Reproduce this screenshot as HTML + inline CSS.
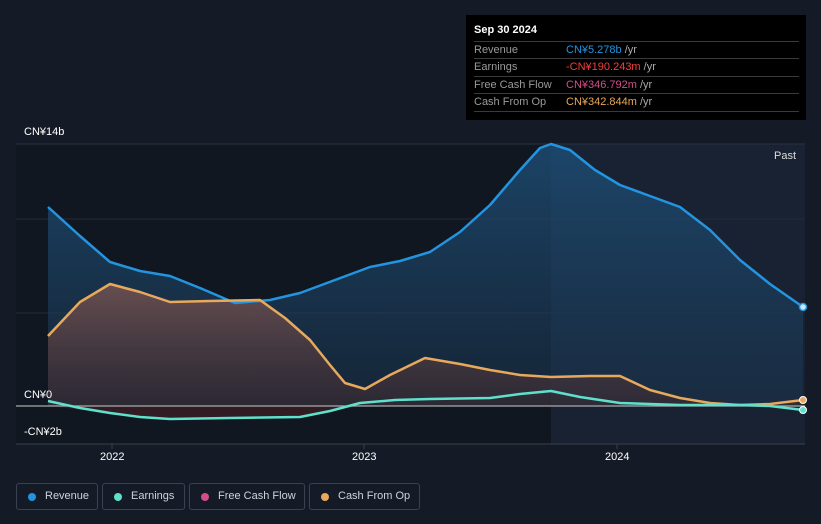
<!DOCTYPE html>
<html><head><style>
body{margin:0;width:821px;height:524px;background:#151b26;font-family:"Liberation Sans",sans-serif;overflow:hidden;position:relative}
.t{position:absolute;color:#fff;font-size:11px}
.tip{position:absolute;left:466px;top:15px;width:340px;height:105px;background:#000;}
.tip .h{position:absolute;left:8px;top:9px;color:#fff;font-size:11px;font-weight:bold}
.row{position:absolute;left:8px;width:325px;border-top:1px solid #3a3a3a;height:17px;font-size:11px;line-height:17px}
.row .k{position:absolute;left:0;color:#9a9a9a}
.row .v{position:absolute;left:92px}
.lg{position:absolute;top:483px;height:27px;border:1px solid #3b4150;border-radius:3px;box-sizing:border-box;color:#cfd3da;font-size:11px;line-height:25px}
.lg i{position:absolute;left:11px;top:9px;width:8px;height:8px;border-radius:50%}
.lg span{position:absolute;left:28px}
</style></head><body>
<svg width="821" height="524" style="position:absolute;left:0;top:0">
<defs>
<linearGradient id="rg" x1="0" y1="0" x2="0" y2="1"><stop offset="0" stop-color="#1e4f78" stop-opacity=".8"/><stop offset="1" stop-color="#1a3550" stop-opacity=".5"/></linearGradient>
<linearGradient id="cg" x1="0" y1="0" x2="0" y2="1"><stop offset="0" stop-color="#7a5552" stop-opacity=".8"/><stop offset="1" stop-color="#3a2a30" stop-opacity=".6"/></linearGradient>
</defs>
<rect x="16" y="144" width="535" height="300" fill="#111720"/>
<rect x="551" y="144" width="254" height="300" fill="#182232"/>
<line x1="16" y1="144" x2="805" y2="144" stroke="#2c3342"/>
<line x1="16" y1="219" x2="805" y2="219" stroke="#242b38"/>
<line x1="16" y1="313" x2="805" y2="313" stroke="#242b38"/>
<polygon fill="url(#rg)" points="48,207 80,236 110,262 140,271 170,276 200,288 235,303 270,300 300,293 335,280 370,267 400,261 430,252 460,232 490,205 520,170 540,148 551,144 570,150 595,170 620,185 650,196 680,207 710,230 740,260 770,284 803,307 803,406 48,406"/>
<polygon fill="url(#cg)" points="48,336 80,302 110,284 140,292 170,302 210,301 260,300 285,318 310,340 330,365 345,383 365,389 390,375 425,358 460,364 490,370 520,375 551,377 590,376 620,376 650,390 680,398 710,403 740,405 770,404 803,400 803,406 48,406"/>
<polygon fill="#3a1e26" opacity=".8" points="48,406 110,413 170,419 300,417 360,406"/>
<polyline fill="none" stroke="#2394e0" stroke-width="2.5" stroke-linejoin="round" points="48,207 80,236 110,262 140,271 170,276 200,288 235,303 270,300 300,293 335,280 370,267 400,261 430,252 460,232 490,205 520,170 540,148 551,144 570,150 595,170 620,185 650,196 680,207 710,230 740,260 770,284 803,307"/>
<polyline fill="none" stroke="#e8a95c" stroke-width="2.5" stroke-linejoin="round" points="48,336 80,302 110,284 140,292 170,302 210,301 260,300 285,318 310,340 330,365 345,383 365,389 390,375 425,358 460,364 490,370 520,375 551,377 590,376 620,376 650,390 680,398 710,403 740,405 770,404 803,400"/>
<line x1="16" y1="406" x2="805" y2="406" stroke="#aaa" stroke-width="1.3"/>
<polyline fill="none" stroke="#5fe0cc" stroke-width="2.5" stroke-linejoin="round" points="48,401 80,408 110,413 140,417 170,419 230,418 300,417 330,411 360,403 395,400 430,399 490,398 520,394 551,391 580,397 620,403 680,405 740,405 770,406 803,410"/>
<line x1="16" y1="444" x2="805" y2="444" stroke="#3a404c"/>
<line x1="112" y1="444" x2="112" y2="449" stroke="#3a404c"/>
<line x1="364" y1="444" x2="364" y2="449" stroke="#3a404c"/>
<line x1="617" y1="444" x2="617" y2="449" stroke="#3a404c"/>
<circle cx="803" cy="307" r="3.5" fill="#cfe6f8" stroke="#2394e0" stroke-width="1.5"/>
<circle cx="803" cy="400" r="3.5" fill="#e8a95c" stroke="#fff" stroke-width="1"/>
<circle cx="803" cy="410" r="3.5" fill="#5fe0cc" stroke="#fff" stroke-width="1"/>
</svg>
<div class="t" style="left:24px;top:126px">CN¥14b</div>
<div class="t" style="left:24px;top:389px">CN¥0</div>
<div class="t" style="left:24px;top:426px">-CN¥2b</div>
<div class="t" style="left:774px;top:150px;color:#ddd">Past</div>
<div class="t" style="left:100px;top:451px">2022</div>
<div class="t" style="left:352px;top:451px">2023</div>
<div class="t" style="left:605px;top:451px">2024</div>
<div class="tip"><div class="h">Sep 30 2024</div>
<div class="row" style="top:26px"><span class="k">Revenue</span><span class="v"><b style="font-weight:normal;color:#2394e0">CN¥5.278b</b> <span style="color:#aaa">/yr</span></span></div>
<div class="row" style="top:43px"><span class="k">Earnings</span><span class="v"><b style="font-weight:normal;color:#f0403c">-CN¥190.243m</b> <span style="color:#aaa">/yr</span></span></div>
<div class="row" style="top:61px"><span class="k">Free Cash Flow</span><span class="v"><b style="font-weight:normal;color:#d24d8c">CN¥346.792m</b> <span style="color:#aaa">/yr</span></span></div>
<div class="row" style="top:78px;border-bottom:1px solid #3a3a3a"><span class="k">Cash From Op</span><span class="v"><b style="font-weight:normal;color:#e8a95c">CN¥342.844m</b> <span style="color:#aaa">/yr</span></span></div>
</div>
<div class="lg" style="left:16px;width:82px"><i style="background:#2394e0"></i><span>Revenue</span></div>
<div class="lg" style="left:102px;width:83px"><i style="background:#5fe0cc"></i><span>Earnings</span></div>
<div class="lg" style="left:189px;width:116px"><i style="background:#d24d8c"></i><span>Free Cash Flow</span></div>
<div class="lg" style="left:309px;width:111px"><i style="background:#e8a95c"></i><span>Cash From Op</span></div>
</body></html>
